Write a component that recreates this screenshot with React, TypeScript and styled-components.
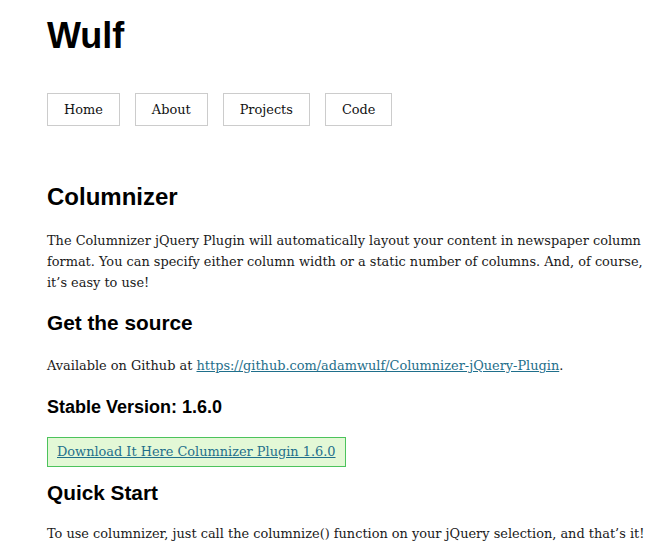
import React from "react";
import styled, { createGlobalStyle } from "styled-components";

const Global = createGlobalStyle`
  html, body { margin: 0; padding: 0; background: #ffffff; }
  body { color: #1a1a1a; font-family: "DejaVu Serif", "Liberation Serif", serif; }
`;

const Page = styled.div`
  padding: 14px 0 0 47px;
  width: 618px;
`;

const Title = styled.h1`
  margin: 0;
  font-family: "Liberation Sans", Arial, sans-serif;
  font-weight: 700;
  font-size: 36px;
  line-height: 1.2;
  color: #000;
`;

const Nav = styled.nav`
  display: flex;
  gap: 15px;
  margin-top: 36px;
`;

const NavItem = styled.a`
  display: block;
  border: 1px solid #cccccc;
  padding: 0 16px;
  line-height: 31px;
  font-size: 12.9px;
  color: #111;
  text-decoration: none;
`;

const Main = styled.main`
  margin-top: 57px;
`;

const H1 = styled.h2`
  margin: 0;
  font-family: "Liberation Sans", Arial, sans-serif;
  font-weight: 700;
  font-size: 24px;
  line-height: 1.2;
  color: #000;
`;

const H2 = styled.h3<{ $top?: number }>`
  margin: ${(p) => p.$top ?? 18}px 0 0;
  font-family: "Liberation Sans", Arial, sans-serif;
  font-weight: 700;
  font-size: 20.8px;
  line-height: 1.2;
  color: #000;
`;

const H3 = styled.h4`
  margin: 20px 0 0;
  font-family: "Liberation Sans", Arial, sans-serif;
  font-weight: 700;
  font-size: 18px;
  line-height: 1.2;
  color: #000;
`;

const P = styled.p<{ $top?: number }>`
  margin: ${(p) => p.$top ?? 19.5}px 0 0;
  font-size: 12.9px;
  line-height: 20.8px;
  color: #1a1a1a;
`;

const Link = styled.a`
  color: #1f6f8b;
  text-decoration: underline;
`;

const Download = styled.div`
  display: inline-block;
  margin-top: 19px;
  padding: 4px 9px 3px;
  background: #e3f8d6;
  border: 1px solid #4cc35c;
  font-size: 12.9px;
  line-height: 20.8px;
`;

export default function App() {
  return (
    <>
      <Global />
      <Page>
        <Title>Wulf</Title>
        <Nav>
          <NavItem href="#">Home</NavItem>
          <NavItem href="#">About</NavItem>
          <NavItem href="#">Projects</NavItem>
          <NavItem href="#">Code</NavItem>
        </Nav>
        <Main>
          <H1>Columnizer</H1>
          <P $top={19}>
            The Columnizer jQuery Plugin will automatically layout your content in newspaper column
            format. You can specify either column width or a static number of columns. And, of course,
            it’s easy to use!
          </P>
          <H2>Get the source</H2>
          <P>
            Available on Github at{" "}
            <Link href="#">https://github.com/adamwulf/Columnizer-jQuery-Plugin</Link>.
          </P>
          <H3>Stable Version: 1.6.0</H3>
          <div>
            <Download>
              <Link href="#">Download It Here Columnizer Plugin 1.6.0</Link>
            </Download>
          </div>
          <H2 $top={14}>Quick Start</H2>
          <P $top={18.5}>
            To use columnizer, just call the columnize() function on your jQuery selection, and that’s it!
          </P>
        </Main>
      </Page>
    </>
  );
}
